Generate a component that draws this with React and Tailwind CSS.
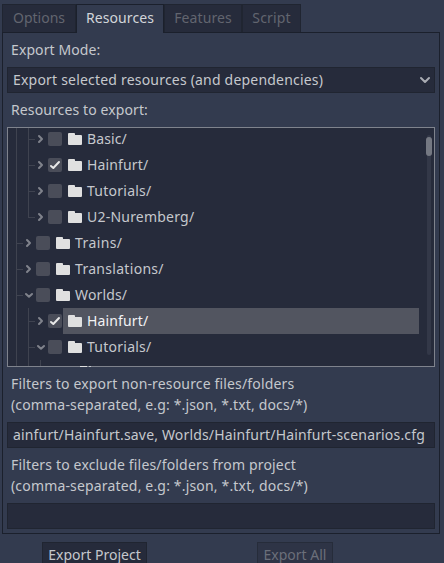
const font = { fontFamily: '"Noto Sans", sans-serif' };

function Text({ children, className = '' }) {
  return <span className={`inline-block -translate-y-px whitespace-pre ${className}`}>{children}</span>;
}

function Chevron({ open }) {
  return (
    <svg width="8" height="10" viewBox="0 0 8 10" fill="none" stroke="#80838c" strokeWidth="2" strokeLinecap="round" strokeLinejoin="round">
      <path d={open ? 'M1 4L4 6.8L7 4' : 'M2 2L5 5L2 8'} />
    </svg>
  );
}

function Folder() {
  return (
    <svg width="14" height="14" viewBox="0 0 14 14" fill="#e0e0e0" className="shrink-0">
      <path d="M1 1H6.2Q7 1 7 2V3H13Q14 3 14 4V12Q14 13 13 13H1Q0 13 0 12V2Q0 1 1 1Z" />
    </svg>
  );
}

function Checkbox({ checked }) {
  return (
    <span className="block h-3.5 w-3.5 shrink-0 rounded-[2px] bg-[#4a4d59]">
      {checked && (
        <svg width="14" height="14" viewBox="0 0 14 14" fill="none" stroke="#e8e8e8" strokeWidth="2" strokeLinecap="round" strokeLinejoin="round">
          <path d="M3 8L5.3 10L11 4" />
        </svg>
      )}
    </span>
  );
}

const ROWS = [
  { name: 'Basic/', level: 2, spacing: 'tracking-[0.1px]' },
  { name: 'Hainfurt/', level: 2, checked: true, spacing: 'tracking-[0.15px]' },
  { name: 'Tutorials/', level: 2, spacing: 'tracking-[0.25px]' },
  { name: 'U2-Nuremberg/', level: 2, last: true, spacing: 'tracking-[0.22px]' },
  { name: 'Trains/', level: 1, spacing: 'tracking-[0.4px]' },
  { name: 'Translations/', level: 1, spacing: 'tracking-[0.3px]' },
  { name: 'Worlds/', level: 1, open: true, spacing: 'tracking-[0.15px]' },
  { name: 'Hainfurt/', level: 2, checked: true, selected: true, spacing: 'tracking-[0.15px]' },
  { name: 'Tutorials/', level: 2, open: true, spacing: 'tracking-[0.25px]' },
];

const line = 'bg-[#3f4350]';

function Guide({ tick, last }) {
  return (
    <span className="flex h-[26px] w-3 shrink-0">
      <span className={`w-px ${line} ${last ? 'h-[14px]' : 'h-[26px]'}`} />
      {tick && <span className={`mt-[13px] h-px w-1.5 ${line}`} />}
    </span>
  );
}

function Row({ name, level, checked, open, selected, last, spacing }) {
  return (
    <div className="flex h-[26px] shrink-0 items-center pl-2">
      {Array.from({ length: level }, (_, i) => (
        <Guide key={i} tick={i === level - 1} last={last && i === level - 1} />
      ))}
      <span className="-ml-3 w-3" />
      <span className="-ml-[3px] flex w-[11px]"><Chevron open={open} /></span>
      <Checkbox checked={checked} />
      <span className={`ml-px flex h-[26px] w-[356px] items-center gap-[5px] pl-[5px] ${selected ? 'bg-[#525560] text-[#f2f3f5]' : ''}`}>
        <Folder />
        <Text className={spacing}>{name}</Text>
      </span>
    </div>
  );
}

function Field({ children }) {
  return (
    <div className="flex h-[26px] shrink-0 items-center justify-between border border-[#202531] bg-[#262b3b] px-[5px]">{children}</div>
  );
}

export default function App() {
  return (
    <div className="flex h-[563px] w-[444px] flex-col overflow-hidden bg-[#333b4f] pt-1 text-[14px] leading-[21px] text-[#c5c8cd]" style={font}>
      <div className="z-10 -mb-px ml-0.5 flex h-[29px] shrink-0 text-[#62656f]">
        <div className="flex h-7 w-[74px] items-center justify-center border border-b-0 border-[#202531] bg-[#262b3b]"><Text>Options</Text></div>
        <div className="flex h-[29px] w-[88px] items-center justify-center border border-b-0 border-[#1b202c] bg-[#333b4f] pb-px text-[#d2d5d9]"><Text className="tracking-[0.1px]">Resources</Text></div>
        <div className="flex h-7 w-[78px] items-center justify-center border border-b-0 border-[#202531] bg-[#262b3b]"><Text className="tracking-[0.1px]">Features</Text></div>
        <div className="flex h-7 w-[59px] items-center justify-center border border-b-0 border-[#202531] bg-[#262b3b]"><Text className="tracking-[0.15px]">Script</Text></div>
      </div>
      <div className="ml-0.5 flex h-[502px] w-[438px] shrink-0 flex-col border border-[#1b202c] px-1 pt-[7px]">
        <Text className="h-[21px] pl-1 tracking-[0.1px]">Export Mode:</Text>
        <div className="mt-1.5 flex flex-col">
          <Field>
            <Text className="tracking-[0.2px]">Export selected resources (and dependencies)</Text>
            <svg width="12" height="12" viewBox="0 0 12 12" fill="none" stroke="#a9acb3" strokeWidth="2" strokeLinecap="round" strokeLinejoin="round" className="-mr-0.5">
              <path d="M2 4L6 8L10 4" />
            </svg>
          </Field>
        </div>
        <Text className="mt-[7px] h-[21px] pl-1 tracking-[0.11px]">Resources to export:</Text>
        <div className="relative mt-1.5 flex h-[240px] shrink-0 justify-between border border-[#7f838d] bg-[#262b3b]">
          <div className="flex h-[238px] w-[411px] flex-col overflow-hidden">
            <div className="-mt-0.5 flex flex-col">
              {ROWS.map((r, i) => <Row key={i} {...r} />)}
              <div className="flex h-1.5 pl-2">
                <Guide />
                <Guide />
                <Guide />
              </div>
            </div>
          </div>
          <div className="mr-0.5 mt-[7px] flex h-[220px] w-1.5 justify-center">
            <div className="flex w-1 justify-center rounded-full bg-[#333848]">
              <div className="mt-0.5 h-[19px] w-1.5 shrink-0 rounded-full bg-[#747882]" />
            </div>
          </div>
          {/* top edge of the next folder, showing over the frame */}
          <span className="absolute -bottom-px left-[72px] h-px w-[7px] bg-[#e0e0e0]" />
          <span className="absolute -bottom-px left-[81px] h-px w-[2px] bg-[#c5c8cd]" />
        </div>
        <Text className="mt-[7px] h-[42px] pl-1 tracking-[0.16px]">{'Filters to export non-resource files/folders\n(comma-separated, e.g: *.json, *.txt, docs/*)'}</Text>
        <div className="mt-1.5 flex flex-col">
          <Field><Text className="tracking-[0.165px]">ainfurt/Hainfurt.save, Worlds/Hainfurt/Hainfurt-scenarios.cfg</Text></Field>
        </div>
        <Text className="mt-[7px] h-[42px] pl-1 tracking-[0.17px]">{'Filters to exclude files/folders from project\n(comma-separated, e.g: *.json, *.txt, docs/*)'}</Text>
        <div className="mt-1.5 flex flex-col"><Field /></div>
      </div>
      <div className="mt-2 flex shrink-0 pl-[42px]">
        <div className="flex h-[26px] w-[105px] items-center justify-center border border-[#202531] bg-[#262b3b]"><Text>Export Project</Text></div>
        <div className="ml-[110px] flex h-[26px] w-[76px] items-center justify-center border border-[#262c3a] bg-[#2e3446] text-[#6b6f7a]"><Text>Export All</Text></div>
      </div>
    </div>
  );
}
